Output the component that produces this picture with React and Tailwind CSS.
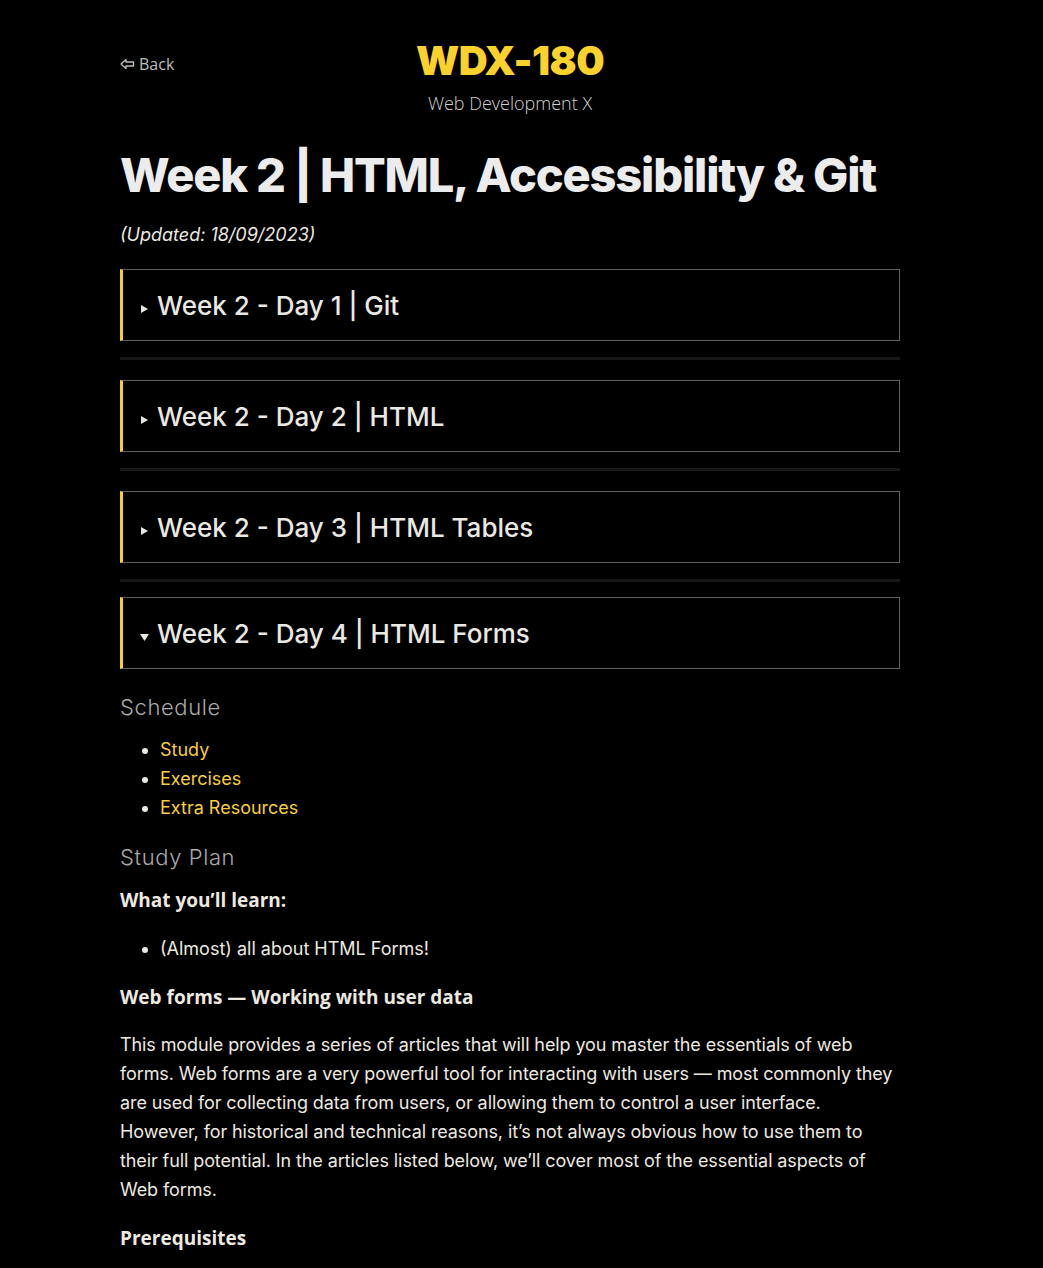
import React from "react";

function Tri({ open }) {
  return (
    <svg width="9" height="10" viewBox="0 0 9 10" className="mr-2 mt-2 shrink-0" fill="#e8e6e0">
      {open ? <path d="M0 2 L9 2 L4.5 9 Z" /> : <path d="M1 1 L8 5 L1 9 Z" />}
    </svg>
  );
}

function Day({ title, open, hr }) {
  return (
    <div>
      <div className="flex h-[72px] items-center border border-[#5f5f5f] border-l-[3px] border-l-[#f9cf2f] pl-[17px]">
        <Tri open={open} />
        <span className="font-['Inter'] text-[26px] font-medium text-[#eae8e3]">{title}</span>
      </div>
      {hr}
    </div>
  );
}

export default function App() {
  return (
    <div className="min-h-[1268px] bg-black font-['Inter'] text-[#ece9e1]">
      <div className="ml-[120px] w-[780px] pt-[39px]">
        <div className="relative flex flex-col items-center">
          <a className="absolute left-0 top-[13px] flex items-center gap-[4px] font-['Open_Sans'] text-[16px] text-[#bdbdbd]">
            <svg width="15" height="12" viewBox="0 0 15 12" fill="none" stroke="#bdbdbd" strokeWidth="1.4" strokeLinejoin="round">
              <path d="M1 6 L6 1.5 V4 H13.5 V8 H6 V10.5 Z" />
            </svg>
            Back
          </a>
          <div className="text-[40px] font-black leading-[44px] tracking-[-0.5px] text-[#fbd12b]">WDX-180</div>
          <div className="mt-[7px] font-['Open_Sans'] text-[18px] font-light text-[#d0d0d0]">Web Development X</div>
        </div>
        <h1 className="mt-[30px] text-[47px] font-extrabold leading-[56px] tracking-[-1.2px] text-[#ececec]">
          Week 2 | HTML, Accessibility &amp; Git
        </h1>
        <p className="mt-[18px] text-[18px] italic leading-[27px] text-[#ece9e1]">(Updated: 18/09/2023)</p>
        <div className="mt-[21px]">
          <Day title="Week 2 - Day 1 | Git" hr={<div className="mb-[20px] mt-[16px] h-[3px] bg-[#181818]" />} />
          <Day title="Week 2 - Day 2 | HTML" hr={<div className="mb-[20px] mt-[16px] h-[3px] bg-[#181818]" />} />
          <Day title="Week 2 - Day 3 | HTML Tables" hr={<div className="mb-[15px] mt-[16px] h-[3px] bg-[#181818]" />} />
          <Day title="Week 2 - Day 4 | HTML Forms" open />
        </div>
        <h3 className="mt-[22px] text-[22px] font-light tracking-[0.6px] text-[#a9a9a9]">Schedule</h3>
        <ul className="mt-[11px] list-disc pl-[40px] text-[18px] leading-[29px] text-[#f6cf3c] marker:text-[#ece9e1]">
          <li>Study</li>
          <li>Exercises</li>
          <li>Extra Resources</li>
        </ul>
        <h3 className="mt-[19px] text-[22px] font-light tracking-[0.6px] text-[#a9a9a9]">Study Plan</h3>
        <p className="mt-[12px] font-['Open_Sans'] text-[19px] font-bold">What you’ll learn:</p>
        <ul className="mt-[19px] list-disc pl-[40px] text-[18px] leading-[29px]">
          <li>(Almost) all about HTML Forms!</li>
        </ul>
        <p className="mt-[20px] font-['Open_Sans'] text-[19px] font-bold">Web forms — Working with user data</p>
        <p className="mt-[19px] text-[18px] leading-[29px] tracking-[-0.1px]">
          This module provides a series of articles that will help you master the essentials of web forms. Web forms are a very powerful tool for interacting with users — most commonly they are used for collecting data from users, or allowing them to control a user interface. However, for historical and technical reasons, it’s not always obvious how to use them to their full potential. In the articles listed below, we’ll cover most of the essential aspects of Web forms.
        </p>
        <p className="mt-[20px] font-['Open_Sans'] text-[19px] font-bold">Prerequisites</p>
      </div>
    </div>
  );
}
